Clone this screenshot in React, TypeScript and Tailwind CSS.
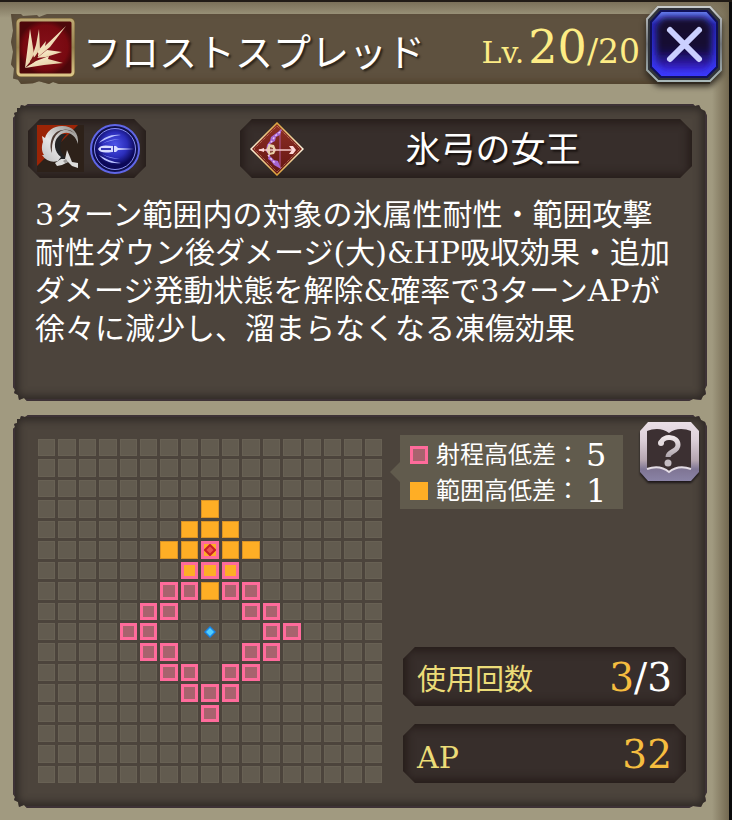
import type { ReactNode } from "react";

const PATTERN = [
  ".................",
  ".................",
  ".................",
  "........o........",
  ".......ooo.......",
  "......ootoo......",
  ".......bbb.......",
  "......ppopp......",
  ".....pp...pp.....",
  "....pp..c..pp....",
  ".....pp...pp.....",
  "......pp.pp......",
  ".......ppp.......",
  "........p........",
  ".................",
  ".................",
  ".................",
];

const CELL: Record<string, string> = {
  ".": "bg-[#625b4f] border border-[#686154]",
  c: "bg-[#625b4f] border border-[#686154]",
  o: "bg-[#ffae25] border border-[#d89328]",
  p: "bg-[#a8636e] border-3 border-[#ff6b9b]",
  b: "bg-[#ffae25] border-3 border-[#ff6b9b]",
  t: "bg-[#ffae25] border-3 border-[#ff6b9b]",
};

function Cell({ kind }: { kind: string }) {
  return (
    <div className={`flex items-center justify-center ${CELL[kind]}`}>
      {kind === "t" && (
        <svg viewBox="0 0 12 12" className="size-3 shrink-0">
          <path d="M6 1 11 6 6 11 1 6Z" fill="#f0524e" stroke="#c91d28" strokeWidth="2" />
        </svg>
      )}
      {kind === "c" && (
        <svg viewBox="0 0 12 12" className="size-3 shrink-0">
          <path d="M6 0 12 6 6 12 0 6Z" fill="#1686e8" />
          <path d="M6 2 10 6 6 10 2 6Z" fill="#52cfff" />
        </svg>
      )}
    </div>
  );
}

function Panel({ className, children }: { className: string; children: ReactNode }) {
  return (
    <section
      className={`bg-[#4c443c] border-2 border-[#3d3236] shadow-[inset_0_0_8px_3px_#2d2724] [clip-path:polygon(0_14px,2px_12px,1px_9px,4px_8px,4px_4px,7px_4px,8px_1px,12px_2px,15px_0,calc(100%-14px)_0,calc(100%-12px)_2px,calc(100%-8px)_1px,calc(100%-6px)_5px,calc(100%-2px)_7px,100%_12px,100%_calc(100%-16px),calc(100%-2px)_calc(100%-12px),calc(100%-1px)_calc(100%-7px),calc(100%-4px)_calc(100%-5px),calc(100%-6px)_calc(100%-1px),calc(100%-14px)_calc(100%-2px),calc(100%-18px)_100%,14px_100%,11px_calc(100%-3px),6px_calc(100%-1px),5px_calc(100%-6px),1px_calc(100%-8px),2px_calc(100%-11px),0_calc(100%-14px))] ${className}`}
    >
      {children}
    </section>
  );
}

function Plate({ className, children }: { className: string; children: ReactNode }) {
  return (
    <div
      className={`flex h-[59px] items-center bg-[#372e2b] shadow-[inset_0_0_10px_3px_#241a17] [clip-path:polygon(12px_0,calc(100%-12px)_0,100%_12px,100%_calc(100%-12px),calc(100%-12px)_100%,12px_100%,0_calc(100%-12px),0_12px)] ${className}`}
    >
      {children}
    </div>
  );
}

function SkillIcon() {
  return (
    <svg viewBox="0 0 59 59" className="size-[59px] shrink-0" aria-hidden="true">
      <defs>
        <linearGradient id="goldFrame" x1="0" y1="0" x2="0" y2="1">
          <stop offset="0" stopColor="#bda872" />
          <stop offset=".5" stopColor="#94804f" />
          <stop offset="1" stopColor="#dcc688" />
        </linearGradient>
        <radialGradient id="redFace">
          <stop offset="0" stopColor="#84101a" />
          <stop offset=".8" stopColor="#780910" />
          <stop offset="1" stopColor="#4d070a" />
        </radialGradient>
        <linearGradient id="spike" x1="0" y1="0" x2="1" y2="1">
          <stop offset="0" stopColor="#fff6d8" />
          <stop offset="1" stopColor="#e0c496" />
        </linearGradient>
      </defs>
      <rect x="0" y="0" width="59" height="59" rx="4" fill="#6a5730" />
      <rect x="2" y="2" width="55" height="55" rx="3" fill="url(#redFace)" stroke="url(#goldFrame)" strokeWidth="3" />
      <g fill="url(#spike)">
        <path d="M9 50 14 11 18 36 14 44Z" />
        <path d="M17 36 20 27 23 11 24 31 18 40Z" />
        <path d="M22 33 30 23 29 28 50 8 34 29 22 39Z" />
        <path d="M21 40 31 32 46 34 30 39Z" />
        <path d="M9 50 20 43 33 38 32 41 47 45 28 47Z" />
      </g>
      <path d="m14 43 9-8-5 9-3 2Z" fill="#7a1a16" />
    </svg>
  );
}

function SlashIcon() {
  return (
    <svg viewBox="0 0 47 47" className="size-[47px] shrink-0" aria-hidden="true">
      <defs>
        <linearGradient id="slashSteel" x1="1" y1="0" x2="0" y2="1">
          <stop offset="0" stopColor="#8d8a86" />
          <stop offset=".6" stopColor="#e6e6e6" />
          <stop offset="1" stopColor="#bcbcbc" />
        </linearGradient>
      </defs>
      <path d="M0 0h47v47H0Z" fill="#2d2119" />
      <path d="M0 0h41L0 41Z" fill="#9b2406" />
      <path d="M18 9C12 20 14 34 22 38L31 34C22 29 20 18 30 9Z" fill="#232425" />
      <path
        d="M41 19C42 8 36 1 25 1C16 1 10 6 8 13L5 11L6 17C4 22 5 27 7 30L5 30C9 36 15 38 21 36L24 32C17 27 16 17 21 12C28 4 38 8 41 19Z"
        fill="url(#slashSteel)"
      />
      <path d="M38 9C30 2 19 4 15 13C13 18 13 24 15 28C14 17 18 7 27 5C31 4 35 5 38 9Z" fill="#4c3a33" />
      <path d="M18 38L24 34L28 34L30 25L33 32L35 37L41 38L41 43L35 41L31 37L25 40L20 41Z" fill="#dcdcdb" />
      <path d="M26 36L29 34L31 37L28 38Z" fill="#9a9896" />
    </svg>
  );
}

function PierceIcon() {
  return (
    <svg viewBox="0 0 50 50" className="size-[50px] shrink-0" aria-hidden="true">
      <defs>
        <radialGradient id="blueOrb" cx=".5" cy=".4">
          <stop offset="0" stopColor="#4d55ea" />
          <stop offset=".6" stopColor="#2b2dba" />
          <stop offset="1" stopColor="#0b0858" />
        </radialGradient>
      </defs>
      <circle cx="25" cy="25" r="24" fill="#10104d" stroke="#5f66e6" strokeWidth="2" />
      <circle cx="25" cy="25" r="20.500" fill="url(#blueOrb)" stroke="#8990f4" strokeWidth="1" />
      <path d="M8 25c2-4 7-4 14-3h4l2 2 16 1-16 1-2 2h-4c-7 1-12 1-14-3Z" fill="#d7dcff" />
      <path d="M11 24h10v2H11Zm12-3h1v8h-1Z" fill="#3436b4" />
      <path d="M9 19c5-6 12-9 22-8-9 1-15 4-22 8Zm0 12c5 6 12 9 22 8-9-1-15-4-22-8Z" fill="#b9c1ff" />
      <path d="M12 20c6-4 12-5 18-5-6 1-12 2-18 5Zm0 10c6 4 12 5 18 5-6-1-12-2-18-5Z" fill="#8d97f8" />
    </svg>
  );
}

function BowIcon() {
  return (
    <svg viewBox="0 0 54 54" className="size-[54px] shrink-0" aria-hidden="true">
      <defs>
        <linearGradient id="bowFace" x1="0" y1="0" x2="0" y2="1">
          <stop offset="0" stopColor="#8f3024" />
          <stop offset="1" stopColor="#631512" />
        </linearGradient>
        <linearGradient id="bowEdge" x1="0" y1="0" x2="0" y2="1">
          <stop offset="0" stopColor="#dba53d" />
          <stop offset=".5" stopColor="#fff4df" />
          <stop offset="1" stopColor="#dca037" />
        </linearGradient>
      </defs>
      <path d="M27 1 53 27 27 53 1 27Z" fill="url(#bowFace)" stroke="url(#bowEdge)" strokeWidth="1.500" />
      <path d="M27 4 50 27 27 50 4 27Z" fill="none" stroke="#d9a07c" strokeWidth=".8" strokeDasharray="1 1" />
      <path d="M30 8v38" stroke="#a04a72" strokeWidth="1.500" />
      <path
        d="M32 7L30 13L26 15L25 19L20 22L19 28L20 34L24 38L28 39L31 47L24 43L21 39L18 37L19 33L16 29L17 23L20 19L21 15L25 12Z"
        fill="#a566d2"
      />
      <path d="M30 10L25 14L22 19L18 24M18 33L22 38L26 42" fill="none" stroke="#ecc6f0" strokeWidth="1.500" strokeDasharray="2 2" />
      <path d="M19 22L24 23L26 28L24 32L19 33L16 28Z" fill="#e8cfa8" />
      <path d="M20 25L23 26L23 30L20 31Z" fill="#8a4a3c" />
      <path d="M9 28H43" stroke="#f3c8c8" strokeWidth="1.500" />
      <path d="M8 28L14 26V30ZM42 28L39 24H43L46 28L43 32H39Z" fill="#ffd8d8" />
    </svg>
  );
}

function CloseButton() {
  return (
    <button type="button" aria-label="閉じる" className="relative -mt-2 size-[76px] shrink-0 self-start drop-shadow-[0_4px_3px_#29231b]">
      <svg viewBox="0 0 76 76" className="size-full">
        <defs>
          <linearGradient id="silver" x1="0" y1="0" x2="0" y2="1">
            <stop offset="0" stopColor="#c8cccc" />
            <stop offset=".5" stopColor="#6f7378" />
            <stop offset="1" stopColor="#a9b8b8" />
          </linearGradient>
          <linearGradient id="blueRim" x1="0" y1="0" x2="0" y2="1">
            <stop offset="0" stopColor="#6b83f2" />
            <stop offset=".2" stopColor="#2a2ac0" />
            <stop offset="1" stopColor="#3b3bff" />
          </linearGradient>
          <linearGradient id="blueWell" x1="0" y1="0" x2="0" y2="1">
            <stop offset="0" stopColor="#130b2b" />
            <stop offset=".6" stopColor="#130b35" />
            <stop offset="1" stopColor="#3922d8" />
          </linearGradient>
          <filter id="softWell" x="-20%" y="-20%" width="140%" height="140%">
            <feGaussianBlur stdDeviation="3" />
          </filter>
        </defs>
        <path d="M12 1h52l11 12v51L64 75H12L1 64V13Z" fill="#30333a" stroke="url(#silver)" strokeWidth="2" />
        <path d="M15 5h46l10 11v45L61 71H15L5 61V16Z" fill="url(#blueRim)" stroke="#11115a" strokeWidth="2" />
        <path d="M17 12h42l7 8v36l-7 8H18l-8-8V20Z" fill="url(#blueWell)" filter="url(#softWell)" />
        <path d="m24 24 29 29m0-29L24 53" stroke="#cbd0ff" strokeWidth="6" strokeLinecap="round" />
      </svg>
    </button>
  );
}

function HelpButton() {
  return (
    <button type="button" aria-label="ヘルプ" className="size-[61px] shrink-0 drop-shadow-[0_2px_1px_#1c1718]">
      <svg viewBox="0 0 61 61" className="size-full">
        <defs>
          <linearGradient id="bookPlate" x1="0" y1="0" x2="0" y2="1">
            <stop offset="0" stopColor="#eadfe6" />
            <stop offset=".3" stopColor="#dccfd8" />
            <stop offset=".65" stopColor="#b5a5b0" />
            <stop offset=".8" stopColor="#7f7594" />
            <stop offset="1" stopColor="#8a83a6" />
          </linearGradient>
          <linearGradient id="questionMetal" x1="0" y1="0" x2="0" y2="1">
            <stop offset="0" stopColor="#eee5e8" />
            <stop offset="1" stopColor="#aea5ad" />
          </linearGradient>
        </defs>
        <path d="M9 1h43l8 9v41l-8 9H9l-8-9V10Z" fill="url(#bookPlate)" />
        <path d="M8 10c7-3 16-3 22 2 6-5 15-5 22-2v38c-8-3-16-2-22 3-6-5-14-6-22-3Z" fill="#3c3032" />
        <path d="M8 48c8-3 16-2 22 3 6-5 14-6 22-3" fill="none" stroke="#e3dce5" strokeWidth="2" />
        <path d="M22 22c2-8 17-7 17 2 0 7-10 6-10 12" fill="none" stroke="url(#questionMetal)" strokeWidth="5" />
        <circle cx="22" cy="22" r="3" fill="#e5dcdf" />
        <circle cx="29" cy="42" r="3.500" fill="#c4bcc2" />
      </svg>
    </button>
  );
}

function LegendRow({ swatch, label, value }: { swatch: string; label: string; value: string }) {
  return (
    <div className="flex h-9 items-center">
      <span className={`mr-2 size-[18px] ${swatch}`} />
      <span className="text-2xl/9">{label}：</span>
      <span className="ml-[6px] text-[32px]/9">{value}</span>
    </div>
  );
}

export default function App() {
  return (
    <main className="relative min-h-screen overflow-hidden border-t-2 border-[#211b16] bg-[#a19a80] pb-3 font-['DejaVu_Serif','Noto_Sans_CJK_JP',serif] text-white">
      <div className="absolute inset-x-0 top-0 h-4 bg-linear-to-b from-[#7b7059] to-[#a19a80]" />
      <div className="absolute inset-y-0 right-0 w-5 border-r-3 border-[#0b0b0c] bg-linear-to-r from-transparent to-[#736850]" />

      <header className="relative mt-3 mr-[10px] ml-[11px] flex h-[70px] items-center">
        <div className="absolute inset-y-0 right-3 left-0 bg-[#5e513f] shadow-[inset_0_-3px_6px_#51422c] [clip-path:polygon(0_0,10px_0,12px_2px,26px_1px,28px_3px,36px_0,100%_0,100%_100%,48px_100%,42px_97%,38px_100%,28px_96%,22px_99%,10px_100%,7px_94%,2px_92%,3px_78%,0_72%,2px_54%,0_40%,2px_24%)]" />
        <div className="relative ml-[5px] flex min-w-0 flex-1 items-center pb-[3px]">
          <SkillIcon />
          <h1 className="ml-2 pt-1 font-['Noto_Sans_CJK_JP',sans-serif] text-[38px]/[60px] font-normal whitespace-nowrap [text-shadow:2px_2px_2px_#2b241b]">
            フロストスプレッド
          </h1>
          <p className="mr-[6px] ml-auto flex items-baseline pt-1 text-[33px]/[60px] whitespace-nowrap text-[#fdec85]">
            <span className="mr-1 text-[30px]/[60px]">Lv.</span>
            <span className="text-[46px]/[60px]">20</span>
            <span>/20</span>
          </p>
        </div>
        <CloseButton />
      </header>

      <Panel className="relative mt-5 mr-[25px] ml-[13px] h-[297px] px-[13px] pt-[13px]">
        <div className="flex justify-between">
          <Plate className="w-[118px] gap-[6px] pl-[9px]">
            <SlashIcon />
            <PierceIcon />
          </Plate>
          <Plate className="w-[452px] pr-[10px] pl-[10px]">
            <BowIcon />
            <h2 className="flex-1 pt-1 text-center text-[35px]/[55px] font-normal [text-shadow:2px_2px_2px_#17110f]">氷弓の女王</h2>
          </Plate>
        </div>
        <p className="mt-[18px] ml-[7px] text-[30px]/[38px] whitespace-nowrap">
          3ターン範囲内の対象の氷属性耐性・範囲攻撃
          <br />
          耐性ダウン後ダメージ(大)&amp;HP吸収効果・追加
          <br />
          ダメージ発動状態を解除&amp;確率で3ターンAPが
          <br />
          徐々に減少し、溜まらなくなる凍傷効果
        </p>
      </Panel>

      <Panel className="relative mt-[14px] mr-[25px] ml-[13px] flex pt-1 pr-[5px] pb-[23px] pl-[23px]">
        <div className="mt-[18px] grid size-[344px] shrink-0 grid-cols-[repeat(17,1fr)] grid-rows-[repeat(17,1fr)] gap-[3px]">
          {PATTERN.flatMap((row, y) => [...row].map((kind, x) => <Cell key={`${y}-${x}`} kind={kind} />))}
        </div>
        <div className="ml-[18px] flex flex-1 flex-col">
          <div className="flex items-start justify-between">
            <div className="relative mt-[14px] w-[223px] bg-[#615b4d] pt-[2px] pl-[10px]">
              <span className="absolute top-[27px] right-full h-5 w-[10px] bg-[#615b4d] [clip-path:polygon(100%_0,0_50%,100%_100%)]" />
              <LegendRow swatch="bg-[#a8636e] border-3 border-[#ff6b9b]" label="射程高低差" value="5" />
              <LegendRow swatch="bg-[#ffae25]" label="範囲高低差" value="1" />
            </div>
            <HelpButton />
          </div>
          <div className="mt-auto mr-[14px] ml-[3px] flex flex-col gap-[18px]">
            <Plate className="justify-between px-[14px] pt-1">
              <span className="pt-1 text-[29px] text-[#ecdc78]">使用回数</span>
              <span className="text-[39px]">
                <span className="text-[#f5bd3f]">3</span>/3
              </span>
            </Plate>
            <Plate className="justify-between px-[14px] pt-1">
              <span className="pt-1 text-[30px] text-[#ecdc78]">AP</span>
              <span className="text-[39px] text-[#f5bd3f]">32</span>
            </Plate>
          </div>
        </div>
      </Panel>
    </main>
  );
}
